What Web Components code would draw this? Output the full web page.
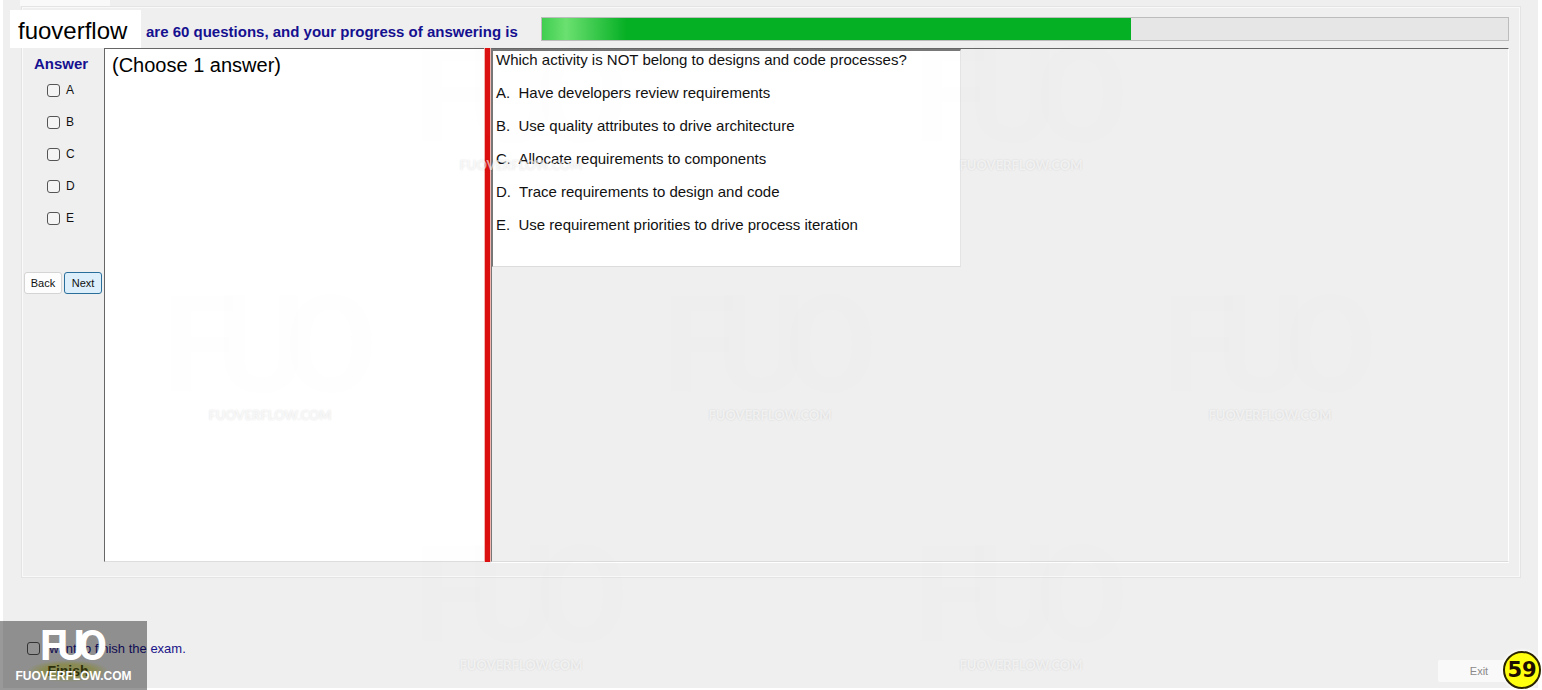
<!DOCTYPE html>
<html lang="en">
<head>
<meta charset="utf-8">
<title>Exam</title>
<style>
  body {
    margin: 0;
    background: #fff;
    color: #111;
    font-family: "Liberation Sans", Arial, sans-serif;
  }
</style>
</head>
<body>
<exam-window>
  <exam-header slot="header" value="61">are 60 questions, and your progress of answering is</exam-header>
  <answer-panel slot="answers" options="A,B,C,D,E"></answer-panel>
  <span slot="hint">(Choose 1 answer)</span>
  <question-box slot="question">
    <p>Which activity is NOT belong to designs and code processes?</p>
    <p>A.&nbsp; Have developers review requirements</p>
    <p>B.&nbsp; Use quality attributes to drive architecture</p>
    <p>C.&nbsp; Allocate requirements to components</p>
    <p>D.&nbsp; Trace requirements to design and code</p>
    <p>E.&nbsp; Use requirement priorities to drive process iteration</p>
  </question-box>
  <exam-footer slot="footer"></exam-footer>
</exam-window>
<water-marks></water-marks>
<name-tag>fuoverflow</name-tag>
<site-logo></site-logo>
<count-badge>59</count-badge>

<script>
class BaseElement extends HTMLElement {
  constructor() {
    super();
    this.attachShadow({ mode: "open" });
  }

  connectedCallback() {
    this.shadowRoot.innerHTML = this.template();
  }
}

customElements.define("exam-window", class extends BaseElement {
  template() {
    return `
    <style>
      :host {
        display: flex;
        flex-direction: column;
        box-sizing: border-box;
        min-height: calc(100vh - 2px);
        margin: 0 4px 2px 3px;
        background: #efefef;
      }
      .tab {
        width: 90px;
        height: 6px;
        margin-left: 17px;
        background: #f9f9f9;
      }
      .group {
        flex: 1;
        display: flex;
        flex-direction: column;
        margin: 0 17px 0 18px;
        padding: 0 11px 15px 0;
        border: 1px solid #e4e4e4;
        box-shadow: inset 1px 1px #f9f9f9, inset -1px -1px #f9f9f9;
      }
      .panes {
        flex: 1;
        display: grid;
        grid-template-columns: 82px 380px 7px 1fr;
      }
      .hint {
        padding: 3px 7px;
        background: #fff;
        border-top: 1px solid #666;
        border-left: 1px solid #666;
        border-bottom: 1px solid #ddd;
        font-size: 20px;
        line-height: 26px;
        color: #000;
      }
      .splitter {
        background: #dc0f0f;
        border: solid #f3b5b0;
        border-width: 0 1px;
      }
      .question {
        border-top: 1px solid #666;
        border-left: 1px solid #777;
        border-right: 1px solid #fff;
        border-bottom: 1px solid #dcdcdc;
        box-shadow: 0 1px #fff;
      }
    </style>
    <div class="tab"></div>
    <div class="group">
      <slot name="header"></slot>
      <div class="panes">
        <slot name="answers"></slot>
        <div class="hint"><slot name="hint"></slot></div>
        <div class="splitter"></div>
        <div class="question"><slot name="question"></slot></div>
      </div>
    </div>
    <slot name="footer"></slot>`;
  }
});

customElements.define("exam-header", class extends BaseElement {
  template() {
    return `
    <style>
      :host {
        display: flex;
        align-items: center;
        gap: 16px;
        height: 41px;
        padding-left: 124px;
      }
      .text {
        min-width: 379px;
        padding-top: 9px;
        font-size: 15px;
        font-weight: bold;
        line-height: 18px;
        white-space: nowrap;
        color: #15108f;
      }
      .bar {
        flex: 1;
        height: 22px;
        margin-top: 2px;
        background: #e6e6e6;
        border: 1px solid #bcbcbc;
      }
      .fill {
        width: ${this.getAttribute("value")}%;
        height: 100%;
        background: linear-gradient(90deg, #3fce50, #6be070 24px, #06b025 84px);
      }
    </style>
    <div class="text"><slot></slot></div>
    <div class="bar" role="progressbar" aria-valuenow="${this.getAttribute("value")}"><div class="fill"></div></div>`;
  }
});

const checkboxStyle = `
  input {
    appearance: none;
    width: 13px;
    height: 13px;
    margin: 0;
    border: 1px solid #555;
    border-radius: 3px;
    background: #f4f4f4;
  }
`;

customElements.define("answer-panel", class extends BaseElement {
  template() {
    const rows = this.getAttribute("options").split(",").map((o) => `
      <label><input type="checkbox" name="answer" value="${o}">${o}</label>`).join("");
    return `
    <style>
      :host {
        display: block;
        border-left: 1px solid #fafafa;
      }
      h2 {
        margin: 0;
        padding: 7px 0 1px 11px;
        font-size: 15px;
        line-height: 18px;
        color: #15108f;
      }
      ${checkboxStyle}
      label {
        display: flex;
        align-items: center;
        gap: 6px;
        height: 32px;
        padding-left: 24px;
        font-size: 12px;
      }
      .buttons {
        display: flex;
        gap: 2px;
        padding: 38px 0 0 1px;
      }
      button {
        width: 38px;
        height: 22px;
        padding: 0;
        border: 1px solid #d4d4d4;
        border-radius: 3px;
        background: #fdfdfd;
        font: 11px "Liberation Sans", Arial, sans-serif;
        color: #111;
      }
      button.next {
        background: #dceffa;
        border-color: #2a6f9c;
      }
    </style>
    <h2>Answer</h2>
    ${rows}
    <div class="buttons">
      <button type="button">Back</button>
      <button type="button" class="next">Next</button>
    </div>`;
  }
});

customElements.define("question-box", class extends BaseElement {
  template() {
    return `
    <style>
      :host {
        display: block;
        box-sizing: border-box;
        width: 469px;
        padding: 0 3px 17px;
        background: #fff;
        border: 1px solid #777;
        border-top: 2px solid #777;
        border-right-color: #e4e4e4;
        border-bottom-color: #dcdcdc;
      }
      ::slotted(p) {
        margin: 0 0 15px;
        font-size: 15px;
        line-height: 18px;
        white-space: nowrap;
      }
    </style>
    <slot></slot>`;
  }
});

customElements.define("exam-footer", class extends BaseElement {
  template() {
    return `
    <style>
      :host {
        display: flex;
        justify-content: space-between;
        align-items: flex-end;
        box-sizing: border-box;
        height: 110px;
        padding: 0 18px 6px 24px;
      }
      ${checkboxStyle}
      label {
        display: flex;
        align-items: center;
        gap: 2px;
        height: 24px;
        font-size: 13px;
        color: #1a148a;
      }
      button {
        display: block;
        width: 82px;
        height: 22px;
        padding: 0;
        border: 0;
        border-radius: 2px;
        background: #f9f9f9;
        font: 11px "Liberation Sans", Arial, sans-serif;
        color: #8a8a8a;
      }
      button.finish {
        background: radial-gradient(closest-side, #e6e88c 60%, #e9ebbc00);
        font-size: 14px;
        font-weight: bold;
        color: #4c5010;
      }
    </style>
    <div>
      <label><input type="checkbox" name="finish">I want to finish the exam.</label>
      <button type="button" class="finish">Finish</button>
    </div>
    <button type="button">Exit</button>`;
  }
});

// overlays

// joined FUO mark, the letters share their stems
const fuoMark = `
  <svg class="mark" viewBox="0 0 63 31" role="img" aria-label="FUO">
    <text x="-2 15 36" y="30" font-family="Roboto, sans-serif" font-size="42" font-weight="700" fill="currentColor">FUO</text>
  </svg>`;

customElements.define("water-marks", class extends BaseElement {
  template() {
    const mark = `<div class="item">${fuoMark}<span>FUOVERFLOW.COM</span></div>`;
    return `
    <style>
      :host {
        position: absolute;
        inset: 0;
        overflow: hidden;
        pointer-events: none;
      }
      .row {
        display: flex;
        align-items: flex-end;
        height: 250px;
        padding-left: 20px;
      }
      .row.first { height: 175px; }
      .row.shift { padding-left: 271px; }
      .item {
        flex: none;
        display: flex;
        flex-direction: column;
        align-items: center;
        gap: 10px;
        width: 500px;
      }
      .mark {
        width: 202px;
        height: 100px;
        overflow: visible;
        color: rgba(128, 128, 128, 0.01);
      }
      span {
        font: bold 13px/20px Lato, "Open Sans", sans-serif;
        color: rgba(255, 255, 255, 0.6);
        text-shadow: 0 0 2px rgba(0, 0, 0, 0.12);
      }
    </style>
    <div class="row first shift">${mark.repeat(2)}</div>
    <div class="row">${mark.repeat(3)}</div>
    <div class="row shift">${mark.repeat(2)}</div>`;
  }
});

customElements.define("name-tag", class extends BaseElement {
  template() {
    return `
    <style>
      :host {
        position: absolute;
        top: 10px;
        left: 10px;
        padding: 7px 14px 3px 8px;
        background: #fff;
        font-size: 24px;
        line-height: 28px;
        color: #000;
      }
    </style>
    <slot></slot>`;
  }
});

customElements.define("site-logo", class extends BaseElement {
  template() {
    return `
    <style>
      :host {
        position: absolute;
        left: 0;
        bottom: 0;
        display: flex;
        flex-direction: column;
        align-items: center;
        gap: 6px;
        box-sizing: border-box;
        width: 147px;
        height: 69px;
        padding-top: 9px;
        background: rgba(0, 0, 0, 0.4);
        color: #fff;
      }
      .mark {
        width: 63px;
        height: 31px;
        overflow: visible;
      }
      .site {
        font-size: 12px;
        font-weight: bold;
        line-height: 18px;
      }
    </style>
    ${fuoMark}
    <div class="site">FUOVERFLOW.COM</div>`;
  }
});

customElements.define("count-badge", class extends BaseElement {
  template() {
    return `
    <style>
      :host {
        position: absolute;
        right: 1px;
        bottom: 1px;
        display: grid;
        place-items: center;
        box-sizing: border-box;
        width: 38px;
        height: 38px;
        border: 2px solid #2a2400;
        border-radius: 50%;
        background: #ffff10;
        box-shadow: 0 0 3px 1px #fff;
        font: bold 21px "DejaVu Sans", sans-serif;
        color: #1c0d00;
      }
    </style>
    <slot></slot>`;
  }
});
</script>
</body>
</html>
